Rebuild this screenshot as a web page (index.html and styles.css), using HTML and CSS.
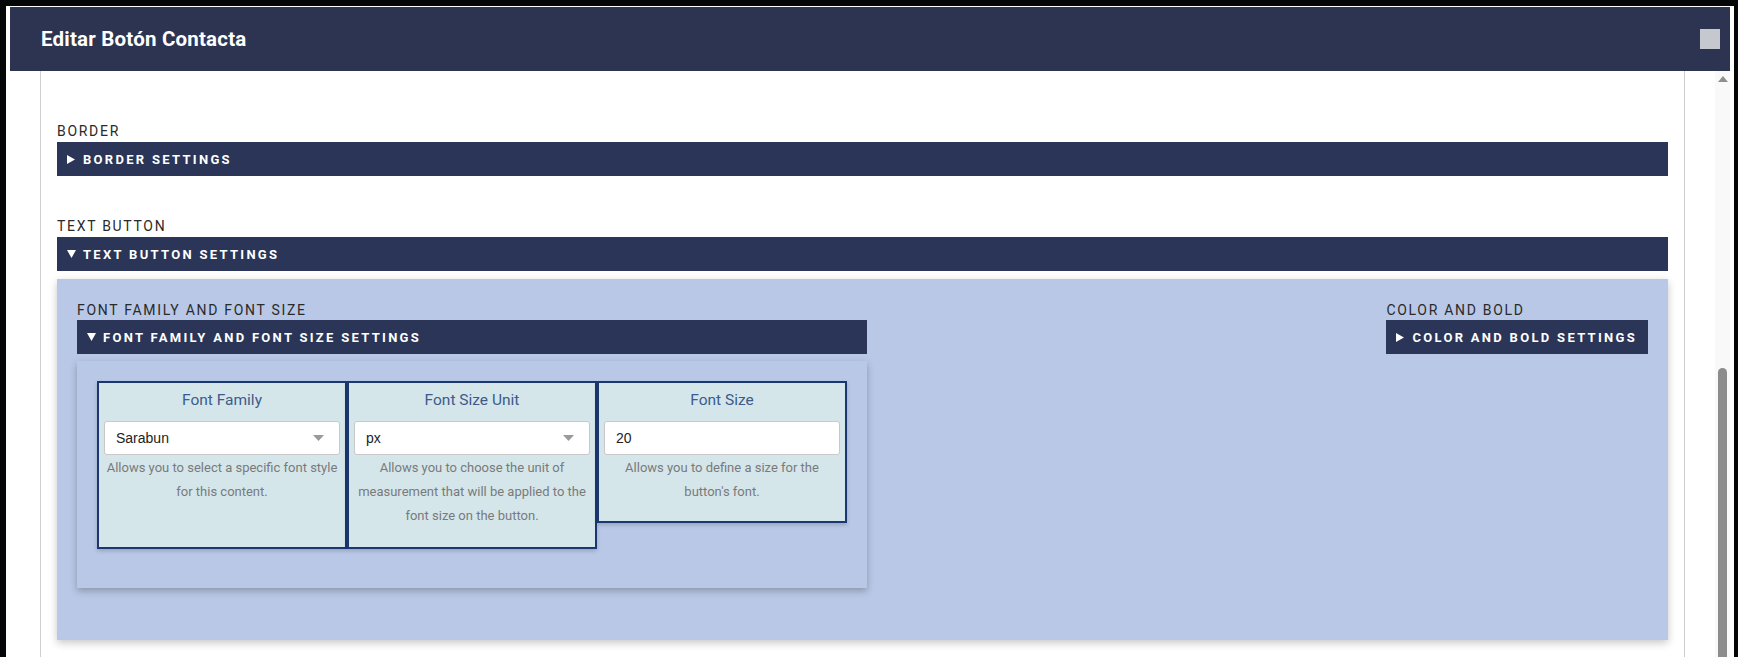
FILE: index.html
```html
<!DOCTYPE html>
<html lang="es">
<head>
<meta charset="utf-8">
<title>Editar Botón Contacta</title>
<link rel="stylesheet" href="styles.css">
</head>
<body>
<div class="modal">
  <div class="modal-header">
    <h1 class="modal-title">Editar Botón Contacta</h1>
    <div class="close-btn"></div>
  </div>
  <div class="modal-body">
    <div class="scroll-area">
      <div class="content">
        <section class="section">
          <div class="label">BORDER</div>
          <div class="bar">
            <svg class="tri-right" width="8" height="9" viewBox="0 0 8 9"><path d="M0 0L8 4.5L0 9Z" fill="#fff"/></svg>
            <span>BORDER SETTINGS</span>
          </div>
        </section>
        <section class="section">
          <div class="label">TEXT BUTTON</div>
          <div class="bar">
            <svg class="tri-down" width="9" height="8" viewBox="0 0 9 8"><path d="M0 0L9 0L4.5 8Z" fill="#fff"/></svg>
            <span>TEXT BUTTON SETTINGS</span>
          </div>
          <div class="panel">
            <div class="col-left">
              <div class="label label-inner">FONT FAMILY AND FONT SIZE</div>
              <div class="bar">
                <svg class="tri-down" width="9" height="8" viewBox="0 0 9 8"><path d="M0 0L9 0L4.5 8Z" fill="#fff"/></svg>
                <span>FONT FAMILY AND FONT SIZE SETTINGS</span>
              </div>
              <div class="card">
                <div class="field">
                  <div class="field-title">Font Family</div>
                  <div class="select">
                    <span>Sarabun</span>
                    <svg width="11" height="6" viewBox="0 0 11 6"><path d="M0 0L11 0L5.5 6Z" fill="#9a9a9a"/></svg>
                  </div>
                  <p class="help">Allows you to select a specific font style for this content.</p>
                </div>
                <div class="field">
                  <div class="field-title">Font Size Unit</div>
                  <div class="select">
                    <span>px</span>
                    <svg width="11" height="6" viewBox="0 0 11 6"><path d="M0 0L11 0L5.5 6Z" fill="#9a9a9a"/></svg>
                  </div>
                  <p class="help">Allows you to choose the unit of measurement that will be applied to the font size on the button.</p>
                </div>
                <div class="field field-short">
                  <div class="field-title">Font Size</div>
                  <div class="select">
                    <span>20</span>
                  </div>
                  <p class="help">Allows you to define a size for the button's font.</p>
                </div>
              </div>
            </div>
            <div class="col-right">
              <div class="label label-inner">COLOR AND BOLD</div>
              <div class="bar bar-inline">
                <svg class="tri-right" width="8" height="9" viewBox="0 0 8 9"><path d="M0 0L8 4.5L0 9Z" fill="#fff"/></svg>
                <span>COLOR AND BOLD SETTINGS</span>
              </div>
            </div>
          </div>
        </section>
      </div>
    </div>
    <div class="scrollbar">
      <svg class="scroll-arrow" width="10" height="6" viewBox="0 0 10 6"><path d="M5 0L10 6L0 6Z" fill="#8f8f8f"/></svg>
      <div class="scroll-thumb"></div>
    </div>
  </div>
</div>
</body>
</html>
```

FILE: styles.css
```css
* {
  box-sizing: border-box;
}

html, body {
  margin: 0;
  padding: 0;
  height: 657px;
  overflow: hidden;
  background: #050608;
  font-family: Roboto, "Liberation Sans", sans-serif;
}

.modal {
  margin: 6px 0 0 6px;
  width: 1728px;
  height: 651px;
  background: #ffffff;
  padding: 1px 4px 0 4px;
  display: flex;
  flex-direction: column;
}

.modal-header {
  height: 64px;
  flex: none;
  background: #2d3451;
  display: flex;
  align-items: center;
  justify-content: space-between;
  padding: 0 10px 0 31px;
}

.modal-title {
  margin: 0;
  font-family: Roboto, "Liberation Sans", sans-serif;
  font-weight: 700;
  font-size: 20.5px;
  color: #ffffff;
  letter-spacing: 0.2px;
}

.close-btn {
  width: 20px;
  height: 20px;
  background: #c6c8d0;
}

.modal-body {
  flex: 1;
  display: flex;
  overflow: hidden;
}

.scroll-area {
  flex: 1;
  padding: 0 30px;
  overflow: hidden;
}

.content {
  height: 100%;
  border-left: 1px solid #cfcfcf;
  border-right: 1px solid #cfcfcf;
  padding: 52px 16px 0 16px;
}

.section {
  margin-bottom: 42px;
}

.label {
  font-size: 14px;
  line-height: 17px;
  letter-spacing: 1.7px;
  color: #2a2a2a;
  margin-bottom: 2px;
}

.label-inner {
  margin-bottom: 1px;
}

.bar {
  height: 34px;
  background: #2a3558;
  color: #ffffff;
  display: flex;
  align-items: center;
  padding: 0 11px 0 10px;
  font-weight: 700;
  font-size: 13px;
  letter-spacing: 2.3px;
}

.bar svg {
  flex: none;
  margin-right: 7px;
}

.bar .tri-right {
  margin-right: 8px;
}

.bar-inline {
  display: inline-flex;
}

.panel {
  margin-top: 8px;
  background: #b8c8e6;
  padding: 23px 20px 52px 20px;
  box-shadow: 0 3px 8px rgba(0, 0, 0, 0.22);
  display: flex;
  justify-content: space-between;
  align-items: flex-start;
}

.col-left {
  width: 790px;
}

.col-right {
  display: flex;
  flex-direction: column;
  align-items: flex-start;
}

.card {
  margin-top: 7px;
  background: #b8c8e6;
  box-shadow: 0 3px 7px rgba(0, 0, 0, 0.25);
  padding: 20px 20px 39px 20px;
  display: flex;
  align-items: stretch;
}

.field {
  width: 250px;
  background: #d4e6ea;
  border: 2px solid #1b3772;
  box-shadow: 0 2px 4px rgba(0, 0, 0, 0.18);
  padding: 7px 5px 19px 5px;
  text-align: center;
}

.field-short {
  align-self: flex-start;
  padding-bottom: 17px;
}

.field-title {
  font-size: 15.5px;
  line-height: 20px;
  color: #3d5b8b;
  margin-bottom: 11px;
}

.select {
  height: 34px;
  background: #ffffff;
  border: 1px solid #c9c9c9;
  border-radius: 3px;
  display: flex;
  align-items: center;
  justify-content: space-between;
  padding: 0 15px 0 11px;
  font-family: "Liberation Sans", Arial, sans-serif;
  font-size: 14px;
  color: #222222;
  text-align: left;
}

.help {
  margin: 1px 0 0 0;
  font-size: 13px;
  line-height: 24px;
  color: #7a7a7a;
}

.scrollbar {
  width: 15px;
  flex: none;
  background: #f9f9f9;
  display: flex;
  flex-direction: column;
  align-items: center;
}

.scroll-arrow {
  margin-top: 5px;
  flex: none;
}

.scroll-thumb {
  margin-top: 286px;
  width: 9px;
  flex: 1;
  background: #8c8c8c;
  border-radius: 5px 5px 0 0;
}
```
